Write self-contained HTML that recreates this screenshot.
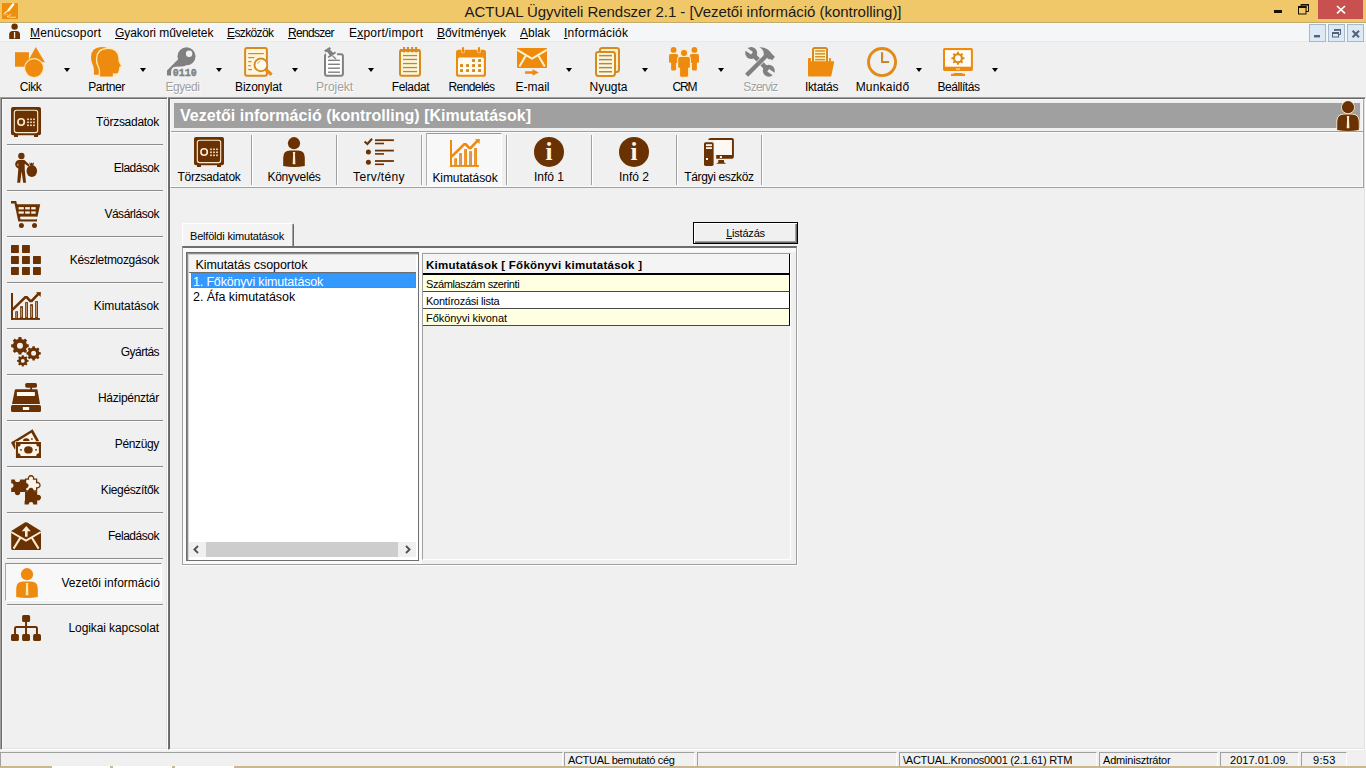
<!DOCTYPE html>
<html lang="hu"><head><meta charset="utf-8"><title>ACTUAL Ügyviteli Rendszer 2.1</title>
<style>
*{box-sizing:border-box;margin:0;padding:0}
html,body{width:1366px;height:768px;overflow:hidden;background:#F0F0F0;font-family:"Liberation Sans",sans-serif;color:#000}
.abs,body>div,body div{position:absolute}
svg{display:block;position:absolute;left:0;top:0}
#title{left:0;top:0;width:1366px;height:22px;background:#F0C869}
#title .t{left:0;width:1366px;top:2px;text-align:center;font-size:15px;line-height:20px;color:#1a1a1a;white-space:nowrap}
#menubar{left:0;top:22px;width:1366px;height:20px;background:#F5F6F7;border-top:1px solid #C2A96C;border-bottom:1px solid #E8E9EB;box-shadow:inset 0 1px 0 #FFFBEE}
#menubar span{position:absolute;top:3px;font-size:12px;line-height:15px;white-space:nowrap}
#menubar u{text-decoration:underline;text-underline-offset:1px}
#toolbar{left:0;top:42px;width:1366px;height:55px;background:#F0F0F0}
.tbtn{top:0;width:61px;height:55px}
.tbtn svg{left:15px;top:5px}
.tbtn span{position:absolute;left:-10px;width:81px;top:38px;text-align:center;font-size:12px;line-height:15px;white-space:nowrap}
.tbtn.dis span{color:#A0A0A0;text-shadow:1px 1px 0 #fff}
.dd{top:26px;width:0;height:0;border-left:3.5px solid transparent;border-right:3.5px solid transparent;border-top:4px solid #000}
#side{left:0;top:97px;width:168px;height:653px;border-left:1px solid #A0A0A0;border-top:1px solid #A0A0A0;border-right:1px solid #fff;border-bottom:1px solid #fff;box-shadow:inset 1px 1px 0 #696969,inset -1px -1px 0 #E3E3E3,inset 2px 2px 0 #FAFAFA}
.sitem{left:0;width:166px;height:45px}
.sitem span{position:absolute;top:16px;font-size:12px;line-height:15px;white-space:nowrap}
.sic{top:8px;width:30px;height:30px}
.ssep{left:7px;width:156px;height:2px;border-top:1px solid #8C8C8C;border-bottom:1px solid #FAFAFA}
.ssel{left:5px;width:157px;height:38px;background:#F8F8F8;border:1px solid #8E8E8E;border-left-color:#A8A8A8;border-right-color:#fff;border-bottom-color:#fff}
#main{left:168px;top:97px;width:1198px;height:653px;border-left:1px solid #707070;border-top:1px solid #A0A0A0;border-right:1px solid #fff;border-bottom:1px solid #fff;box-shadow:inset 1px 1px 0 #696969,inset -1px -1px 0 #E3E3E3}
#band{left:170px;top:99px;width:1194px;height:89px;border-left:1px solid #FAFAFA;border-top:1px solid #FAFAFA;border-right:1px solid #A0A0A0;border-bottom:1px solid #A0A0A0;box-shadow:inset -1px -1px 0 #FAFAFA}

#hdr{left:174px;top:103px;width:1186px;height:25px;background:#A0A0A0}
#hdr span{position:absolute;left:6px;top:3px;font-size:16px;line-height:20px;font-weight:bold;color:#fff;white-space:nowrap}
#hdric{left:1333px;top:101px;width:30px;height:30px}
.hl{height:1px;background:#A0A0A0}
.subbtn{width:84px;height:55px}
.subbtn span{position:absolute;left:-8px;width:100px;top:38px;text-align:center;font-size:12px;line-height:15px;white-space:nowrap}
.sic2{left:27px;top:5px;width:30px;height:30px}
.subsep{top:135px;width:2px;height:50px;border-left:1px solid #A0A0A0;border-right:1px solid #fff}
.subsel{top:133px;width:76px;height:53px;background:#F8F8F8;border:1px solid #9A9A9A;border-left-color:#B0B0B0;border-right-color:#fff;border-bottom-color:#fff}
#tab{left:182px;top:223px;width:112px;height:23px;background:#F4F4F4;border-left:1px solid #fff;border-top:1px solid #fff;border-right:1px solid #696969;box-shadow:inset -1px 0 0 #A0A0A0;border-radius:2px 2px 0 0;z-index:2}
#tab span{position:absolute;left:7px;top:5px;font-size:11px;line-height:14px;white-space:nowrap}
#tabpanel{left:182px;top:246px;width:616px;height:320px;border-left:1px solid #A0A0A0;border-top:2px solid #6E6E6E;border-right:2px solid #A0A0A0;border-right-color:#A0A0A0;border-bottom:2px solid #A0A0A0;box-shadow:inset 0 4px 0 #FAFAFA}
#tabpanel:after{content:"";position:absolute;right:-2px;top:-2px;bottom:-2px;width:1px;background:#FDFDFD}
#tabpanel:before{content:"";position:absolute;left:-1px;right:-2px;bottom:-2px;height:1px;background:#FDFDFD}
#listwrap{left:183px;top:248px;width:239px;height:316px;background:#FAFAFA}
#btn{left:693px;top:222px;width:105px;height:22px;background:#F0F0F0;border:1px solid #000;box-shadow:inset 1px 1px 0 #fff,inset -1px -1px 0 #696969,inset -2px -2px 0 #A0A0A0;z-index:3}
#btn span{position:absolute;left:0;width:100%;top:3px;text-align:center;font-size:11px;line-height:14px}
#list{left:186px;top:252px;width:233px;height:309px;background:#fff;border-left:1px solid #6E6E6E;border-top:1px solid #6E6E6E;border-right:1px solid #6E6E6E;border-bottom:1px solid #6E6E6E;box-shadow:inset 1px 1px 0 #8C8C8C,inset 2px 2px 0 #D4D4D4}
#list span{position:absolute;white-space:nowrap;font-size:12.5px;line-height:15px}
.lh{left:2px;top:2px;width:227px;height:18px;background:#F4F4F4;border-bottom:1px solid #6E6E6E}
.lh span{left:6.5px;top:2.5px}
.lsel{left:4px;top:20px;width:225px;height:15px;background:#3399FF;color:#fff;outline:1px dotted rgba(120,110,90,.45);outline-offset:-1px}
.lsel span{left:2px;top:1.5px}
.lrow{left:4px;top:35px;width:225px;height:15px}
.lrow span{left:2px;top:1.5px}
.hs{left:2px;top:289px;width:227px;height:15px;background:#F0F0F0}
.hs b{position:absolute;left:17px;top:0;width:192px;height:15px;background:#CDCDCD}
#grid{left:422px;top:253px;width:369px;height:307px;border-left:1px solid #A0A0A0;border-top:1px solid #A0A0A0;border-right:1px solid #fff;border-bottom:1px solid #fff}
#grid span{position:absolute;left:3px;white-space:nowrap;font-size:11px;line-height:14px}
.gh{left:0;top:0;width:367px;height:21px;background:#F4F4F4;border-bottom:2px solid #000;border-right:1px solid #000}
.gh span{top:4px;left:3px!important;font-weight:bold;font-size:11.5px!important}
.gr{left:0;width:367px;height:17px;background:#fff;border-bottom:1px solid #484848;border-right:1px solid #000}
.gr.y{background:#FFFFE1}
.gr span{top:2px}
#status{left:0;top:752px;width:1366px;height:14px}
.sp{top:0;height:14px;border-top:1px solid #A0A0A0;border-left:1px solid #A0A0A0;border-right:1px solid #fff}
.sp span{position:absolute;left:3px;top:1px;font-size:11px;line-height:13px;white-space:nowrap}
#strip{left:0;top:766px;width:1366px;height:2px;background:#C9B88F}
#strip i{position:absolute;top:0;height:2px;background:#fff}

#wmin{left:1274px;top:10px;width:8px;height:3px;background:#1a1000}
#wmax{left:1298px;top:4px;width:12px;height:11px}
#wclose{left:1318px;top:0;width:45px;height:19px;background:#C8504F}
.mdi{top:1px;width:17px;height:18px;background:#DDE9F5;border:1px solid #A8B8CC}
.mdi svg{left:-1px;top:-0.5px}
</style></head><body>
<div id="title"><div style="left:2px;top:3px;width:16px;height:16px"><svg width="16" height="16" viewBox="0 0 16 16" style="overflow:visible"><rect width="16" height="16" fill="#EE8E0C"/><path fill="none" stroke="#FFFBE8" stroke-width="2.3" stroke-linecap="round" d="M11.2 1.2 L6.6 7.2"/><path fill="none" stroke="#FFF0B8" stroke-width="1.1" d="M6.8 7 L2 10.8"/><path fill="none" stroke="#FFE7A0" stroke-width="1" d="M9.4 11.2 Q6.4 12.6 5 13.6 Q9 14.8 13.8 14.2"/><path fill="none" stroke="#F8C060" stroke-width="0.8" d="M1.5 12 L6 11.4"/></svg></div><div class="t" style="letter-spacing:-0.04px">ACTUAL Ügyviteli Rendszer 2.1 - [Vezetői információ (kontrolling)]</div>
<div id="wmin"></div>
<div id="wmax"><svg width="12" height="11" viewBox="0 0 12 11"><path fill="none" stroke="#1a1000" stroke-width="1" d="M3 2.5 V0.5 H10.5 V7.5 H8"/><rect x="3" y="0" width="8" height="1.6" fill="#1a1000"/><rect x="0.5" y="2.5" width="7.5" height="7.5" fill="none" stroke="#1a1000"/><rect x="0" y="2" width="8.5" height="2" fill="#1a1000"/></svg></div>
<div id="wclose"><svg width="45" height="19" viewBox="0 0 45 19"><path stroke="#fff" stroke-width="1.7" d="M19 6 L27 13.4 M27 6 L19 13.4"/></svg></div></div>
<div id="menubar"><div style="left:9px;top:0px;width:16px;height:17px"><svg width="12" height="17" viewBox="0 0 12 17" style="overflow:visible"><circle cx="5.6" cy="3.6" r="3.2" fill="#6A3202"/><path fill="#6A3202" d="M0.2 16 V11.5 Q0.2 8 3.7 8 H7.5 Q11 8 11 11.5 V16Z"/><rect x="4.9" y="9" width="1.3" height="6.3" fill="#FCEBD2"/></svg></div>
<span style="letter-spacing:0.163px;left:30px"><u>M</u>enücsoport</span><span style="letter-spacing:-0.056px;left:115px"><u>G</u>yakori műveletek</span><span style="letter-spacing:-0.625px;left:227px"><u>E</u>szközök</span><span style="letter-spacing:-0.696px;left:288px"><u>R</u>endszer</span><span style="letter-spacing:0.219px;left:349px">E<u>x</u>port/import</span><span style="letter-spacing:-0.037px;left:437px"><u>B</u>ővítmények</span><span style="letter-spacing:-0.008px;left:520px"><u>A</u>blak</span><span style="letter-spacing:0.197px;left:564px"><u>I</u>nformációk</span>
<div class="mdi" style="left:1309px"><svg width="17" height="17" viewBox="0 0 17 17"><rect x="5" y="10" width="6" height="2.4" fill="#52627A"/></svg></div>
<div class="mdi" style="left:1328px"><svg width="17" height="17" viewBox="0 0 17 17"><path fill="none" stroke="#52627A" stroke-width="1" d="M6.5 6 V4.5 H12.5 V9.5 H11"/><rect x="6" y="4" width="7" height="1.8" fill="#52627A"/><rect x="4.5" y="7.5" width="6" height="4.5" fill="none" stroke="#52627A"/><rect x="4" y="7" width="7" height="2" fill="#52627A"/></svg></div>
<div class="mdi" style="left:1347px"><svg width="17" height="17" viewBox="0 0 17 17"><path stroke="#52627A" stroke-width="2" d="M5.6 5.8 L12 12.2 M12 5.8 L5.6 12.2"/></svg></div>
</div>
<div id="toolbar">
<div class="tbtn" style="left:0px"><svg width="30" height="30" viewBox="0 0 30 30" style="overflow:visible"><rect x="0" y="5.2" width="13.9" height="14.5" fill="#EE8A0E"/><path fill="#EE8A0E" d="M20.8 0 L29.9 15.2 H12.4Z"/><circle cx="19.05" cy="21.05" r="8.9" fill="#EE8A0E" stroke="#FFE9B5" stroke-width="2.2" paint-order="stroke"/></svg><span style="letter-spacing:-0.448px">Cikk</span></div>
<div class="dd" style="left:64px"></div>
<div class="tbtn" style="left:76px"><svg width="30" height="30" viewBox="0 0 30 30" style="overflow:visible"><path fill="#EE8A0E" transform="translate(-6.2,-1.9)" d="M9.1 29.7 V24.2 Q9 21.2 7.5 18.6 Q6 15.6 6.2 12 Q6.6 2 17 2 Q26.4 2 27.3 10.8 Q27.4 13.6 27.6 14.8 L29.8 18.8 Q29.9 19.8 28.1 20 L28.1 22 Q27.6 23 27.7 23.6 Q27.5 26.3 25 26.4 L21.8 26.3 V29.7Z"/><path fill="#EE8A0E" stroke="#FFE9B5" stroke-width="2.6" paint-order="stroke" d="M9.1 29.7 V24.2 Q9 21.2 7.5 18.6 Q6 15.6 6.2 12 Q6.6 2 17 2 Q26.4 2 27.3 10.8 Q27.4 13.6 27.6 14.8 L29.8 18.8 Q29.9 19.8 28.1 20 L28.1 22 Q27.6 23 27.7 23.6 Q27.5 26.3 25 26.4 L21.8 26.3 V29.7Z"/><rect x="7" y="29.7" width="17" height="2" fill="#F0F0F0"/></svg><span style="letter-spacing:-0.377px">Partner</span></div>
<div class="dd" style="left:140px"></div>
<div class="tbtn dis" style="left:152px"><svg width="30" height="30" viewBox="0 0 30 30" style="overflow:visible"><path fill="#808080" d="M0 23.4 L11.4 12 L19 18.6 Q17 19.6 14 19.6 L8.4 19.7 Q4.1 20.5 4.1 24.5 V28.6 H0Z"/><circle cx="19.5" cy="9.3" r="9" fill="#808080"/><circle cx="22.1" cy="6.7" r="3.2" fill="#F2F2F2"/><text x="5.7" y="28.6" font-family="Liberation Mono,monospace" font-weight="bold" font-size="10" fill="#808080" stroke="#808080" stroke-width="0.35">0110</text></svg><span style="letter-spacing:-0.441px">Egyedi</span></div>
<div class="dd" style="left:216px"></div>
<div class="tbtn" style="left:228px"><svg width="30" height="30" viewBox="0 0 30 30" style="overflow:visible"><rect x="2.1" y="1" width="21.8" height="27.8" rx="2" fill="#FFF6DC" stroke="#D68B22" stroke-width="2"/><rect x="5.2" y="6" width="15.6" height="1.2" fill="#D68B22"/><rect x="5.2" y="10" width="6.2" height="1.2" fill="#D68B22"/><rect x="5.2" y="14" width="3.4" height="1.2" fill="#D68B22"/><rect x="5.2" y="18" width="2.6" height="1.2" fill="#D68B22"/><rect x="5.2" y="22" width="3.8" height="1.2" fill="#D68B22"/><path stroke="#EE8A0E" stroke-width="3.2" d="M22.4 22.2 L28.6 27.8"/><circle cx="17.9" cy="17.9" r="6.4" fill="#FFFBF0" stroke="#D68B22" stroke-width="1.9"/><path fill="none" stroke="#B9935A" stroke-width="0.8" d="M14.6 16.8 Q15.2 14.8 17.4 14.2"/></svg><span style="letter-spacing:-0.213px">Bizonylat</span></div>
<div class="dd" style="left:292px"></div>
<div class="tbtn dis" style="left:304px"><svg width="30" height="30" viewBox="0 0 30 30" style="overflow:visible"><rect x="6" y="7.2" width="17.9" height="21.6" rx="2" fill="#FFFFFF" stroke="#808080" stroke-width="2"/><path fill="#F6F6F6" d="M6.6 5 L17.6 5 L19 12 L8 12Z"/><rect x="9.1" y="12.6" width="11.8" height="1.4" fill="#808080"/><rect x="9.1" y="16.6" width="11.8" height="1.4" fill="#808080"/><rect x="9.1" y="20.5" width="11.8" height="1.4" fill="#808080"/><rect x="9.1" y="24.5" width="11.8" height="1.4" fill="#808080"/><path fill="#808080" d="M5.1 3.6 L10.6 -0.1 L12.1 1.7 L6.8 5.6Z M7.9 4.6 L10.8 2.4 L15.3 6.8 L11.8 9.7Z M8.6 9.7 L16 4.5 L17.1 6 L9.8 11.1Z"/><path stroke="#808080" stroke-width="1.3" d="M13.4 8.6 L16.9 12"/></svg><span style="letter-spacing:-0.06px">Projekt</span></div>
<div class="dd" style="left:368px"></div>
<div class="tbtn" style="left:380px"><svg width="30" height="30" viewBox="0 0 30 30" style="overflow:visible"><rect x="5" y="3" width="20" height="25.8" rx="2" fill="#FFF6D8" stroke="#D68B22" stroke-width="2"/><rect x="5" y="2" width="20" height="2.8" fill="#D68B22"/><rect x="8" y="0" width="2.1" height="5.4" fill="#D68B22"/><rect x="11.9" y="0" width="2.1" height="5.4" fill="#D68B22"/><rect x="16.1" y="0" width="2.1" height="5.4" fill="#D68B22"/><rect x="20" y="0" width="2.1" height="5.4" fill="#D68B22"/><rect x="8" y="7.9" width="14" height="1.3" fill="#B58A3C"/><rect x="8" y="11.8" width="14" height="1.3" fill="#B58A3C"/><rect x="8" y="15.9" width="14" height="1.3" fill="#B58A3C"/><rect x="8" y="19.9" width="14" height="1.3" fill="#B58A3C"/><rect x="8" y="23.9" width="14" height="1.3" fill="#B58A3C"/></svg><span style="letter-spacing:-0.339px">Feladat</span></div>
<div class="tbtn" style="left:441px"><svg width="30" height="30" viewBox="0 0 30 30" style="overflow:visible"><rect x="0" y="2.8" width="30" height="27" rx="2.6" fill="#EE8A0E"/><rect x="2" y="10.4" width="25.9" height="17.4" rx="1.6" fill="#FFFBEE"/><rect x="5.3" y="-0.6" width="3.3" height="6.9" rx="1.6" fill="#FFE9B5"/><rect x="21.4" y="-0.6" width="3.3" height="6.9" rx="1.6" fill="#FFE9B5"/><rect x="5.9" y="0" width="2.1" height="5.7" rx="1" fill="#EE8A0E"/><rect x="22" y="0" width="2.1" height="5.7" rx="1" fill="#EE8A0E"/><rect x="4.1" y="17.1" width="2.9" height="2.9" fill="#D58A1E"/><rect x="4.1" y="22.1" width="2.9" height="2.9" fill="#D58A1E"/><rect x="10.1" y="17.1" width="2.9" height="2.9" fill="#D58A1E"/><rect x="10.1" y="22.1" width="2.9" height="2.9" fill="#D58A1E"/><rect x="16.1" y="12.1" width="2.9" height="2.9" fill="#D58A1E"/><rect x="16.1" y="17.1" width="2.9" height="2.9" fill="#D58A1E"/><rect x="16.1" y="22.1" width="2.9" height="2.9" fill="#D58A1E"/><rect x="22.1" y="12.1" width="2.9" height="2.9" fill="#D58A1E"/><rect x="22.1" y="17.1" width="2.9" height="2.9" fill="#D58A1E"/><rect x="22.1" y="22.1" width="2.9" height="2.9" fill="#D58A1E"/></svg><span style="letter-spacing:-0.6px">Rendelés</span></div>
<div class="tbtn" style="left:502px"><svg width="30" height="30" viewBox="0 0 30 30" style="overflow:visible"><rect x="0" y="1" width="30" height="19.9" rx="1" fill="#EE8A0E"/><path fill="none" stroke="#FFF3D0" stroke-width="2" d="M0.2 2.8 L15 11.5 L29.9 2.8 M2.4 19.6 L8.6 9 M27.8 19.6 L21.6 9"/><path fill="#EE8A0E" d="M8 24.3 H15.6 V22.3 L21.8 25.5 L15.6 28.7 V26.8 H8Z"/></svg><span>E-mail</span></div>
<div class="dd" style="left:566px"></div>
<div class="tbtn" style="left:578px"><svg width="30" height="30" viewBox="0 0 30 30" style="overflow:visible"><rect x="6.9" y="1" width="19.1" height="24" rx="2.4" fill="#FFEFC4" stroke="#D68B22" stroke-width="2"/><rect x="3" y="5" width="19" height="23.9" rx="2.4" fill="#FFF7DC" stroke="#D68B22" stroke-width="2"/><rect x="6" y="7.9" width="13" height="1.5" fill="#A88A54"/><rect x="6" y="11.9" width="13" height="1.5" fill="#A88A54"/><rect x="6" y="15.9" width="13" height="1.5" fill="#A88A54"/><rect x="6" y="19.9" width="13" height="1.5" fill="#A88A54"/><rect x="6" y="24" width="13" height="1.5" fill="#A88A54"/></svg><span style="letter-spacing:-0.006px">Nyugta</span></div>
<div class="dd" style="left:642px"></div>
<div class="tbtn" style="left:654px"><svg width="30" height="30" viewBox="0 0 30 30" style="overflow:visible"><g fill="#EE8A0E"><circle cx="4.6" cy="2.9" r="2.9"/><path d="M1.8 7.1 H7.3999999999999995 Q9.2 7.1 9.2 8.9 V14.8 Q9.2 15.8 8.2 15.8 H7.1 V22.200000000000003 Q7.1 23.6 5.699999999999999 23.6 H3.4999999999999996 Q2.0999999999999996 23.6 2.0999999999999996 22.200000000000003 V15.8 H1.0 Q0.0 15.8 0.0 14.8 V8.9 Q0.0 7.1 1.8 7.1Z"/><circle cx="25.4" cy="2.9" r="2.9"/><path d="M22.599999999999998 7.1 H28.2 Q30.0 7.1 30.0 8.9 V14.8 Q30.0 15.8 29.0 15.8 H27.9 V22.200000000000003 Q27.9 23.6 26.5 23.6 H24.299999999999997 Q22.9 23.6 22.9 22.200000000000003 V15.8 H21.799999999999997 Q20.799999999999997 15.8 20.799999999999997 14.8 V8.9 Q20.799999999999997 7.1 22.599999999999998 7.1Z"/></g><g fill="#EE8A0E" stroke="#FFE9B5" stroke-width="2.2" paint-order="stroke"><circle cx="15.05" cy="5.9" r="3.0"/><path d="M11.000000000000002 10.1 H19.099999999999998 Q20.9 10.1 20.9 11.9 V19.8 Q20.9 20.8 19.9 20.8 H19.0 V28.400000000000002 Q19.0 29.8 17.6 29.8 H12.500000000000002 Q11.100000000000001 29.8 11.100000000000001 28.400000000000002 V20.8 H10.200000000000001 Q9.200000000000001 20.8 9.200000000000001 19.8 V11.9 Q9.200000000000001 10.1 11.000000000000002 10.1Z"/></g></svg><span style="letter-spacing:-1.164px">CRM</span></div>
<div class="dd" style="left:718px"></div>
<div class="tbtn dis" style="left:730px"><svg width="30" height="30" viewBox="0 0 30 30" style="overflow:visible"><g fill="#808080"><path stroke="#808080" stroke-width="4.6" d="M8 7.6 L22 22"/><circle cx="6.2" cy="6" r="6"/><circle cx="23.8" cy="23.8" r="6"/></g><rect x="-7.5" y="-1.6" width="7.5" height="3.2" fill="#F0F0F0" transform="translate(7,6.2) rotate(35)"/><rect x="0" y="-1.6" width="7.5" height="3.2" fill="#F0F0F0" transform="translate(23.2,23.2) rotate(35)"/><path stroke="#F0F0F0" stroke-width="5.6" d="M11 19 L20 10"/><path stroke="#808080" stroke-width="4.4" d="M1.6 28.3 L22 8"/><path fill="#808080" d="M14.3 0.3 Q22 -0.2 27 7 L29.9 9.8 L27 13.4 L25.6 11.9 L24 12.6 L18.6 7.4 Q19.4 3 14.3 0.3Z"/></svg><span style="letter-spacing:-0.724px">Szerviz</span></div>
<div class="tbtn" style="left:791px"><svg width="30" height="30" viewBox="0 0 30 30" style="overflow:visible"><rect x="7" y="1" width="14" height="16" rx="1.6" fill="#FFF3C0" stroke="#D68B22" stroke-width="2"/><rect x="9.1" y="3.2" width="10" height="1.5" fill="#D8902E"/><rect x="9.1" y="6.1" width="10" height="1.5" fill="#D8902E"/><rect x="9.1" y="9" width="10" height="1.5" fill="#D8902E"/><rect x="9.1" y="11.9" width="10" height="1.5" fill="#D8902E"/><path fill="#EE8A0E" d="M2 12.1 Q2 11.1 3 11.1 H4.9 V15 L5.2 14.3 H23.1 V11.1 H24.2 Q25 11.1 25 12 V14.3 H27.4 Q28.4 14.3 28.1 15.4 L25.4 28.6 Q25.2 29.6 24.2 29.6 H3 Q2 29.6 2 28.6Z"/></svg><span style="letter-spacing:-0.31px">Iktatás</span></div>
<div class="tbtn" style="left:852px"><svg width="30" height="30" viewBox="0 0 30 30" style="overflow:visible"><circle cx="15.05" cy="15.05" r="13.55" fill="none" stroke="#E28A16" stroke-width="2.9"/><path fill="#C8882E" d="M14 5.2 H16.1 V14 H22.1 V15.9 H14Z"/></svg><span style="letter-spacing:0.21px">Munkaidő</span></div>
<div class="dd" style="left:916px"></div>
<div class="tbtn" style="left:928px"><svg width="30" height="30" viewBox="0 0 30 30" style="overflow:visible"><rect x="0" y="1" width="29.9" height="22.9" rx="1.6" fill="#EE8A0E"/><rect x="2" y="3.1" width="25.9" height="16.6" fill="#FFFDF5"/><rect x="13" y="21.5" width="3.9" height="1.1" fill="#FFE9B5"/><path fill="#EE8A0E" d="M10.9 26 H19.2 L19.6 26.8 H22 V28.9 H8 V26.8 H10.5Z"/><path fill-rule="evenodd" fill="#DC8A1C" d="M19.95 10.26 L21.49 10.35 L21.49 12.15 L19.95 12.24 L19.19 14.08 L20.21 15.23 L18.93 16.51 L17.78 15.49 L15.94 16.25 L15.85 17.79 L14.05 17.79 L13.96 16.25 L12.12 15.49 L10.97 16.51 L9.69 15.23 L10.71 14.08 L9.95 12.24 L8.41 12.15 L8.41 10.35 L9.95 10.26 L10.71 8.42 L9.69 7.27 L10.97 5.99 L12.12 7.01 L13.96 6.25 L14.05 4.71 L15.85 4.71 L15.94 6.25 L17.78 7.01 L18.93 5.99 L20.21 7.27 L19.19 8.42Z M12.05 11.25 a2.9 2.9 0 1 0 5.8 0 a2.9 2.9 0 1 0 -5.8 0Z"/></svg><span style="letter-spacing:-0.441px">Beállítás</span></div>
<div class="dd" style="left:992px"></div>
</div>
<div id="side">
</div>
<div id="sidein" style="left:0;top:0;width:167px;height:750px">
<div class="sitem" style="top:99px"><div class="sic" style="left:11px"><svg width="30" height="30" viewBox="0 0 30 30" style="overflow:visible"><rect x="0" y="0" width="30" height="28.2" rx="2" fill="#6A3202"/><rect x="3" y="27" width="4" height="3" fill="#6A3202"/><rect x="23" y="27" width="4" height="3" fill="#6A3202"/><rect x="3.3" y="3.3" width="23.4" height="22.3" rx="2.3" fill="none" stroke="#FCEBD2" stroke-width="1.1"/><circle cx="10.1" cy="15" r="3.2" fill="none" stroke="#FCEBD2" stroke-width="1.6"/><rect x="16.2" y="11.5" width="1.6" height="1.6" fill="#FCEBD2"/><rect x="16.2" y="14.5" width="1.6" height="1.6" fill="#FCEBD2"/><rect x="16.2" y="17.5" width="1.6" height="1.6" fill="#FCEBD2"/><rect x="19.2" y="11.5" width="1.6" height="1.6" fill="#FCEBD2"/><rect x="19.2" y="14.5" width="1.6" height="1.6" fill="#FCEBD2"/><rect x="19.2" y="17.5" width="1.6" height="1.6" fill="#FCEBD2"/><rect x="22.2" y="11.5" width="1.6" height="1.6" fill="#FCEBD2"/><rect x="22.2" y="14.5" width="1.6" height="1.6" fill="#FCEBD2"/><rect x="22.2" y="17.5" width="1.6" height="1.6" fill="#FCEBD2"/></svg></div><span style="letter-spacing:-0.273px;right:7px">Törzsadatok</span></div>
<div class="ssep" style="top:144px"></div>
<div class="sitem" style="top:145px"><div class="sic" style="left:11px"><svg width="30" height="30" viewBox="0 0 30 30" style="overflow:visible"><circle cx="10.4" cy="2.9" r="3.2" fill="#6A3202"/><path fill-rule="evenodd" fill="#6A3202" d="M7.6 7.1 Q10.5 6.6 13.4 7.1 L18.6 12 L17.4 13.6 L13.7 10.8 L13.7 16 L15 29.7 L12.2 29.7 L10.6 18.5 L9.2 29.7 L6.2 29.7 L7.3 16 L7.3 15.6 Q4.2 14.2 4.1 11.6 Q4.4 8 7.6 7.1Z M7.2 10 L6.3 12 L7.3 13.4Z"/><ellipse cx="20.8" cy="18" rx="5.3" ry="6" fill="#6A3202"/><path fill="#6A3202" d="M18.2 9 L19.6 10.4 L20.6 9.4 L21.6 10.4 L23 9 L22.4 12.5 L19 12.5Z"/></svg></div><span style="letter-spacing:-0.525px;right:7px">Eladások</span></div>
<div class="ssep" style="top:190px"></div>
<div class="sitem" style="top:191px"><div class="sic" style="left:11px"><svg width="30" height="30" viewBox="0 0 30 30" style="overflow:visible"><path fill="#6A3202" d="M0 2.1 H5.2 L6 5.2 H29.2 L26.5 17.8 H9.1 L9.6 20.2 H26 V22.6 H7.3 L3.5 4.6 H0Z"/><rect x="7.6" y="8.1" width="5.2" height="2.3" fill="#FBF0E2"/><rect x="7.6" y="12.4" width="5.2" height="2.3" fill="#FBF0E2"/><rect x="14.2" y="8.1" width="4.6" height="2.3" fill="#FBF0E2"/><rect x="14.2" y="12.4" width="4.6" height="2.3" fill="#FBF0E2"/><rect x="20.2" y="8.1" width="4.5" height="2.3" fill="#FBF0E2"/><rect x="20.2" y="12.4" width="4.5" height="2.3" fill="#FBF0E2"/><rect x="9.6" y="17.8" width="15.4" height="2.4" fill="#FBF0E2"/><circle cx="10.4" cy="26.5" r="2.5" fill="#6A3202"/><circle cx="23.5" cy="26.5" r="2.5" fill="#6A3202"/></svg></div><span style="letter-spacing:-0.475px;right:7px">Vásárlások</span></div>
<div class="ssep" style="top:236px"></div>
<div class="sitem" style="top:237px"><div class="sic" style="left:11px"><svg width="30" height="30" viewBox="0 0 30 30" style="overflow:visible"><rect x="0" y="0" width="7.9" height="7.9" rx="0.6" fill="#6A3202"/><rect x="0" y="11" width="7.9" height="7.9" rx="0.6" fill="#6A3202"/><rect x="0" y="22" width="7.9" height="7.9" rx="0.6" fill="#6A3202"/><rect x="11" y="0" width="7.9" height="7.9" rx="0.6" fill="#6A3202"/><rect x="11" y="11" width="7.9" height="7.9" rx="0.6" fill="#6A3202"/><rect x="11" y="22" width="7.9" height="7.9" rx="0.6" fill="#6A3202"/><rect x="22" y="11" width="7.9" height="7.9" rx="0.6" fill="#6A3202"/><rect x="22" y="22" width="7.9" height="7.9" rx="0.6" fill="#6A3202"/></svg></div><span style="letter-spacing:-0.325px;right:7px">Készletmozgások</span></div>
<div class="ssep" style="top:282px"></div>
<div class="sitem" style="top:283px"><div class="sic" style="left:11px"><svg width="30" height="30" viewBox="0 0 30 30" style="overflow:visible"><rect x="0" y="2" width="2" height="27" fill="#6A3202"/><rect x="0" y="27" width="28.9" height="1.9" fill="#6A3202"/><rect x="4.75" y="20.75" width="1.8" height="6.699999999999999" fill="#B88452" fill-opacity="0.75" stroke="#6A3202" stroke-width="0.9"/><rect x="9.649999999999999" y="15.649999999999999" width="1.8" height="11.8" fill="#B88452" fill-opacity="0.75" stroke="#6A3202" stroke-width="0.9"/><rect x="14.649999999999999" y="11.549999999999999" width="1.8" height="15.9" fill="#B88452" fill-opacity="0.75" stroke="#6A3202" stroke-width="0.9"/><rect x="19.65" y="13.649999999999999" width="1.8" height="13.8" fill="#B88452" fill-opacity="0.75" stroke="#6A3202" stroke-width="0.9"/><rect x="24.65" y="10.549999999999999" width="1.8" height="16.9" fill="#B88452" fill-opacity="0.75" stroke="#6A3202" stroke-width="0.9"/><path d="M1.6 18.6 L14.2 6.3 H15.8 L19.2 9.9 H20.7 L27.6 2.6" fill="none" stroke="#6A3202" stroke-width="2.6"/><path fill="#6A3202" d="M25 1.2 L29.9 0.9 L29.6 5.9Z"/></svg></div><span style="letter-spacing:-0.073px;right:7px">Kimutatások</span></div>
<div class="ssep" style="top:328px"></div>
<div class="sitem" style="top:329px"><div class="sic" style="left:11px"><svg width="30" height="30" viewBox="0 0 30 30" style="overflow:visible"><path fill-rule="evenodd" fill="#6A3202" d="M15.86 7.14 L17.74 7.34 L17.74 10.26 L15.86 10.46 L15.01 12.51 L16.20 13.97 L14.13 16.04 L12.67 14.85 L10.62 15.70 L10.42 17.58 L7.50 17.58 L7.30 15.70 L5.25 14.85 L3.79 16.04 L1.72 13.97 L2.91 12.51 L2.06 10.46 L0.18 10.26 L0.18 7.34 L2.06 7.14 L2.91 5.09 L1.72 3.63 L3.79 1.56 L5.25 2.75 L7.30 1.90 L7.50 0.02 L10.42 0.02 L10.62 1.90 L12.67 2.75 L14.13 1.56 L16.20 3.63 L15.01 5.09Z M5.96 8.80 a3.0 3.0 0 1 0 6.0 0 a3.0 3.0 0 1 0 -6.0 0Z"/><path fill-rule="evenodd" fill="#6A3202" d="M28.24 15.00 L29.80 15.15 L29.80 17.55 L28.24 17.70 L27.55 19.38 L28.54 20.59 L26.84 22.29 L25.63 21.30 L23.95 21.99 L23.80 23.55 L21.40 23.55 L21.25 21.99 L19.57 21.30 L18.36 22.29 L16.66 20.59 L17.65 19.38 L16.96 17.70 L15.40 17.55 L15.40 15.15 L16.96 15.00 L17.65 13.32 L16.66 12.11 L18.36 10.41 L19.57 11.40 L21.25 10.71 L21.40 9.15 L23.80 9.15 L23.95 10.71 L25.63 11.40 L26.84 10.41 L28.54 12.11 L27.55 13.32Z M20.10 16.35 a2.5 2.5 0 1 0 5.0 0 a2.5 2.5 0 1 0 -5.0 0Z"/><path fill-rule="evenodd" fill="#6A3202" d="M16.18 22.85 L17.52 22.95 L17.52 24.85 L16.18 24.95 L15.64 26.25 L16.52 27.27 L15.17 28.62 L14.15 27.74 L12.85 28.28 L12.75 29.62 L10.85 29.62 L10.75 28.28 L9.45 27.74 L8.43 28.62 L7.08 27.27 L7.96 26.25 L7.42 24.95 L6.08 24.85 L6.08 22.95 L7.42 22.85 L7.96 21.55 L7.08 20.53 L8.43 19.18 L9.45 20.06 L10.75 19.52 L10.85 18.18 L12.75 18.18 L12.85 19.52 L14.15 20.06 L15.17 19.18 L16.52 20.53 L15.64 21.55Z M9.90 23.90 a1.9 1.9 0 1 0 3.8 0 a1.9 1.9 0 1 0 -3.8 0Z"/></svg></div><span style="letter-spacing:-0.553px;right:7px">Gyártás</span></div>
<div class="ssep" style="top:374px"></div>
<div class="sitem" style="top:375px"><div class="sic" style="left:11px"><svg width="30" height="30" viewBox="0 0 30 30" style="overflow:visible"><rect x="14.2" y="0" width="11.8" height="4.7" rx="1.6" fill="#6A3202"/><rect x="19.2" y="4" width="1.9" height="3" fill="#6A3202"/><path fill="#6A3202" d="M4.6 6.2 H25.8 Q26.4 6.2 26.6 7 L29 20.9 H1 L3.8 7 Q4 6.2 4.6 6.2Z"/><rect x="5.9" y="9" width="18" height="4" rx="0.5" fill="#FFFAF2"/><rect x="0" y="22" width="30" height="7" rx="1.6" fill="#6A3202"/><rect x="11.9" y="24" width="6.3" height="2.9" rx="0.5" fill="#FFFAF2"/></svg></div><span style="letter-spacing:-0.273px;right:7px">Házipénztár</span></div>
<div class="ssep" style="top:420px"></div>
<div class="sitem" style="top:421px"><div class="sic" style="left:11px"><svg width="30" height="30" viewBox="0 0 30 30" style="overflow:visible"><path fill="#6A3202" d="M0 13.5 L21.6 0.2 L28.3 12.2 L3.7 20.3Z"/><path fill="#FDF5EA" d="M3.6 14.2 L20.4 3.8 L25.4 12.4 L5.6 18.6Z"/><path fill="#6A3202" d="M12 11.9 A3.2 2.6 0 0 1 18.5 11.9Z"/><rect x="20.1" y="9.2" width="1.6" height="1.6" fill="#6A3202"/><rect x="4.3" y="12.4" width="26.2" height="17" fill="#FDF5EA"/><path fill-rule="evenodd" fill="#6A3202" d="M4.9 13 H30 V28.9 H4.9Z M9.6 15 A2.6 2.6 0 0 1 7 17.6 V24.3 A2.6 2.6 0 0 1 9.6 26.9 H25.3 A2.6 2.6 0 0 1 27.9 24.3 V17.6 A2.6 2.6 0 0 1 25.3 15Z"/><ellipse cx="17.4" cy="20.9" rx="4.3" ry="3.7" fill="#6A3202"/><rect x="9.2" y="20.1" width="1.6" height="1.6" fill="#6A3202"/><rect x="24.2" y="20.1" width="1.6" height="1.6" fill="#6A3202"/></svg></div><span style="letter-spacing:-0.367px;right:7px">Pénzügy</span></div>
<div class="ssep" style="top:466px"></div>
<div class="sitem" style="top:467px"><div class="sic" style="left:11px"><svg width="30" height="30" viewBox="0 0 30 30" style="overflow:visible"><path fill="#FAF4EC" stroke="#6A3202" stroke-width="1.3" d="M14.6 4.2 H17.4 A2.7 2.7 0 1 1 22.6 4.2 H25.6 V7.6 A2.7 2.7 0 1 1 25.6 12.8 V16 H14.6Z"/><path fill="#6A3202" d="M0.2 4.4 H3.9 A2.4 2.4 0 0 0 9.1 4.4 H14 V8.2 A2.6 2.6 0 1 1 14 13 V16.9 H9.1 A2.7 2.7 0 1 1 3.9 16.9 H0.2 V13 A2.4 2.4 0 0 0 0.2 8.2Z"/><path fill="#6A3202" d="M14 16.4 H17.3 A2.8 2.8 0 1 1 22.7 16.4 H26.2 V20 A2.8 2.8 0 1 1 26.2 25.2 V29.4 H22.3 A2.3 2.3 0 0 0 17.7 29.4 H13.6 V25.8 H14Z"/></svg></div><span style="letter-spacing:-0.345px;right:7px">Kiegészítők</span></div>
<div class="ssep" style="top:512px"></div>
<div class="sitem" style="top:513px"><div class="sic" style="left:11px"><svg width="30" height="30" viewBox="0 0 30 30" style="overflow:visible"><path fill="#6A3202" d="M15 1.2 Q15.6 1.2 16.2 1.6 L30 10 V27.8 Q30 28.9 28.9 28.9 H1.3 Q0.2 28.9 0.2 27.8 V10 L13.8 1.6 Q14.4 1.2 15 1.2Z"/><path fill="none" stroke="#FCEBD2" stroke-width="2" d="M0.2 11 L15 19.6 L29.9 11 M2.6 27.6 L9.4 16.6 M27.6 27.6 L20.8 16.6"/><path fill="#FCEBD2" d="M15.3 5 L19.8 10.2 H16.6 V15.8 H14 V10.2 H10.8Z"/></svg></div><span style="letter-spacing:-0.472px;right:7px">Feladások</span></div>
<div class="ssep" style="top:558px"></div>
<div class="ssel" style="top:563px"></div>
<div class="sitem" style="top:560px"><div class="sic" style="left:12px"><svg width="30" height="30" viewBox="0 0 30 30" style="overflow:visible"><circle cx="15" cy="6.2" r="6.1" fill="#EE8A0E" stroke="none" stroke-width="1.6" paint-order="stroke"/><path fill="#EE8A0E" stroke="none" stroke-width="1.6" paint-order="stroke" d="M4.2 29 V20.5 Q4.2 13.5 11.2 13.5 H18.8 Q25.8 13.5 25.8 20.5 V29 Q15 30.9 4.2 29Z"/><path fill="#FFE9A8" d="M13.8 15 H16.3 L16 17 L16.4 27.3 H13.7 L14.1 17Z"/></svg></div><span style="letter-spacing:0.026px;right:6px">Vezetői információ</span></div>
<div class="ssep" style="top:604px"></div>
<div class="sitem" style="top:605px"><div class="sic" style="left:11px"><svg width="30" height="30" viewBox="0 0 30 30" style="overflow:visible"><rect x="11.1" y="2" width="8" height="7" rx="1.6" fill="#6A3202"/><rect x="0" y="21" width="7.9" height="7" rx="1.6" fill="#6A3202"/><rect x="11.1" y="21" width="7.9" height="7" rx="1.6" fill="#6A3202"/><rect x="22.1" y="21" width="7.9" height="7" rx="1.6" fill="#6A3202"/><path fill="none" stroke="#6A3202" stroke-width="2" d="M15.05 8 V22 M4.05 22 V15.2 Q4.05 14 5.2 14 H24.8 Q25.95 14 25.95 15.2 V22"/></svg></div><span style="letter-spacing:-0.091px;right:7px">Logikai kapcsolat</span></div>
</div>
<div id="main"></div><div id="band"></div>

<div id="hdr"><span style="letter-spacing:0.017px">Vezetői információ (kontrolling) [Kimutatások]</span></div>
<div id="hdric"><svg width="30" height="30" viewBox="0 0 30 30" style="overflow:visible"><circle cx="15" cy="6.2" r="6.1" fill="#6A3202" stroke="#FCEBD2" stroke-width="1.6" paint-order="stroke"/><path fill="#6A3202" stroke="#FCEBD2" stroke-width="1.6" paint-order="stroke" d="M4.2 29 V20.5 Q4.2 13.5 11.2 13.5 H18.8 Q25.8 13.5 25.8 20.5 V29 Q15 30.9 4.2 29Z"/><path fill="#FCEBD2" d="M13.8 15 H16.3 L16 17 L16.4 27.3 H13.7 L14.1 17Z"/></svg></div>
<div class="hl" style="left:171px;top:131px;width:1192px;box-shadow:0 1px 0 #FAFAFA"></div>
<div class="subbtn" style="left:167px;top:132px"><div class="sic2"><svg width="30" height="30" viewBox="0 0 30 30" style="overflow:visible"><rect x="0" y="0" width="30" height="28.2" rx="2" fill="#6A3202"/><rect x="3" y="27" width="4" height="3" fill="#6A3202"/><rect x="23" y="27" width="4" height="3" fill="#6A3202"/><rect x="3.3" y="3.3" width="23.4" height="22.3" rx="2.3" fill="none" stroke="#FCEBD2" stroke-width="1.1"/><circle cx="10.1" cy="15" r="3.2" fill="none" stroke="#FCEBD2" stroke-width="1.6"/><rect x="16.2" y="11.5" width="1.6" height="1.6" fill="#FCEBD2"/><rect x="16.2" y="14.5" width="1.6" height="1.6" fill="#FCEBD2"/><rect x="16.2" y="17.5" width="1.6" height="1.6" fill="#FCEBD2"/><rect x="19.2" y="11.5" width="1.6" height="1.6" fill="#FCEBD2"/><rect x="19.2" y="14.5" width="1.6" height="1.6" fill="#FCEBD2"/><rect x="19.2" y="17.5" width="1.6" height="1.6" fill="#FCEBD2"/><rect x="22.2" y="11.5" width="1.6" height="1.6" fill="#FCEBD2"/><rect x="22.2" y="14.5" width="1.6" height="1.6" fill="#FCEBD2"/><rect x="22.2" y="17.5" width="1.6" height="1.6" fill="#FCEBD2"/></svg></div><span style="letter-spacing:-0.273px">Törzsadatok</span></div>
<div class="subsep" style="left:251px"></div>
<div class="subbtn" style="left:252px;top:132px"><div class="sic2"><svg width="30" height="30" viewBox="0 0 30 30" style="overflow:visible"><circle cx="15" cy="6.2" r="6.1" fill="#6A3202" stroke="none" stroke-width="1.6" paint-order="stroke"/><path fill="#6A3202" stroke="none" stroke-width="1.6" paint-order="stroke" d="M4.2 29 V20.5 Q4.2 13.5 11.2 13.5 H18.8 Q25.8 13.5 25.8 20.5 V29 Q15 30.9 4.2 29Z"/><path fill="#FCEBD2" d="M13.8 15 H16.3 L16 17 L16.4 27.3 H13.7 L14.1 17Z"/></svg></div><span style="letter-spacing:-0.247px">Könyvelés</span></div>
<div class="subsep" style="left:336px"></div>
<div class="subbtn" style="left:337px;top:132px"><div class="sic2"><svg width="30" height="30" viewBox="0 0 30 30" style="overflow:visible"><rect x="11" y="2.3" width="18.9" height="1.8" fill="#6A3202"/><rect x="11" y="5.699999999999999" width="9" height="1.6" fill="#6A3202"/><rect x="11" y="12.7" width="18.9" height="1.8" fill="#6A3202"/><rect x="11" y="16.099999999999998" width="9" height="1.6" fill="#6A3202"/><rect x="11" y="23.1" width="18.9" height="1.8" fill="#6A3202"/><rect x="11" y="26.5" width="9" height="1.6" fill="#6A3202"/><path fill="none" stroke="#6A3202" stroke-width="2.1" d="M0.6 4.4 L3.4 7 L8 1.8"/><circle cx="4.4" cy="14.9" r="2.5" fill="#6A3202"/><circle cx="4.4" cy="25.2" r="2.5" fill="#6A3202"/></svg></div><span style="letter-spacing:0.352px">Terv/tény</span></div>
<div class="subsep" style="left:421px"></div>
<div class="subsel" style="left:426px"></div>
<div class="subbtn" style="left:423px;top:133px"><div class="sic2"><svg width="30" height="30" viewBox="0 0 30 30" style="overflow:visible"><rect x="0" y="2" width="2" height="27" fill="#EE8A0E"/><rect x="0" y="27" width="28.9" height="1.9" fill="#EE8A0E"/><rect x="4.75" y="20.75" width="1.8" height="6.699999999999999" fill="#B88452" fill-opacity="0.75" stroke="#EE8A0E" stroke-width="0.9"/><rect x="9.649999999999999" y="15.649999999999999" width="1.8" height="11.8" fill="#B88452" fill-opacity="0.75" stroke="#EE8A0E" stroke-width="0.9"/><rect x="14.649999999999999" y="11.549999999999999" width="1.8" height="15.9" fill="#B88452" fill-opacity="0.75" stroke="#EE8A0E" stroke-width="0.9"/><rect x="19.65" y="13.649999999999999" width="1.8" height="13.8" fill="#B88452" fill-opacity="0.75" stroke="#EE8A0E" stroke-width="0.9"/><rect x="24.65" y="10.549999999999999" width="1.8" height="16.9" fill="#B88452" fill-opacity="0.75" stroke="#EE8A0E" stroke-width="0.9"/><path d="M1.6 18.6 L14.2 6.3 H15.8 L19.2 9.9 H20.7 L27.6 2.6" fill="none" stroke="#EE8A0E" stroke-width="2.6"/><path fill="#EE8A0E" d="M25 1.2 L29.9 0.9 L29.6 5.9Z"/></svg></div><span style="letter-spacing:-0.073px">Kimutatások</span></div>
<div class="subsep" style="left:506px"></div>
<div class="subbtn" style="left:507px;top:132px"><div class="sic2"><svg width="30" height="30" viewBox="0 0 30 30" style="overflow:visible"><circle cx="15" cy="14.9" r="15" fill="#6A3202"/><text x="14.9" y="23" text-anchor="middle" font-family="Liberation Serif,serif" font-weight="bold" font-size="25" fill="#FFF6E8">i</text></svg></div><span style="letter-spacing:-0.006px">Infó 1</span></div>
<div class="subsep" style="left:591px"></div>
<div class="subbtn" style="left:592px;top:132px"><div class="sic2"><svg width="30" height="30" viewBox="0 0 30 30" style="overflow:visible"><circle cx="15" cy="14.9" r="15" fill="#6A3202"/><text x="14.9" y="23" text-anchor="middle" font-family="Liberation Serif,serif" font-weight="bold" font-size="25" fill="#FFF6E8">i</text></svg></div><span style="letter-spacing:-0.006px">Infó 2</span></div>
<div class="subsep" style="left:676px"></div>
<div class="subbtn" style="left:677px;top:132px"><div class="sic2"><svg width="30" height="30" viewBox="0 0 30 30" style="overflow:visible"><path fill="#6A3202" d="M4.1 3.1 Q4.6 1 6.5 1 H27.9 Q29.9 1 29.9 3 V19.8 Q29.9 21.8 27.9 21.8 H12.2 V17.9 H27.9 V3.1Z"/><rect x="10.6" y="3.1" width="17.3" height="14.8" fill="#FDF8F2"/><rect x="15.9" y="19" width="2" height="2" fill="#FDF8F2"/><path fill="#6A3202" d="M14.3 23.1 H20 V25.2 L22.1 26.8 H12.2 L14.3 25.2Z"/><rect x="0" y="5.2" width="9.6" height="23.7" rx="1.6" fill="#6A3202"/><rect x="2" y="7.2" width="5.9" height="1.9" fill="#FDF8F2"/><rect x="2" y="10.2" width="5.9" height="1.8" fill="#FDF8F2"/><rect x="2" y="21" width="2" height="2" fill="#FDF8F2"/></svg></div><span style="letter-spacing:-0.353px">Tárgyi eszköz</span></div>
<div class="subsep" style="left:761px"></div>
<div id="tab"><span style="letter-spacing:-0.191px">Belföldi kimutatások</span></div>
<div id="tabpanel"></div><div id="listwrap"></div>
<div id="btn"><span style="letter-spacing:-0.211px"><u>L</u>istázás</span></div>
<div id="list">
 <div class="lh"><span style="letter-spacing:-0.069px">Kimutatás csoportok</span></div>
 <div class="lsel"><span style="letter-spacing:-0.172px">1. Főkönyvi kimutatások</span></div>
 <div class="lrow"><span style="letter-spacing:-0.037px">2. Áfa kimutatások</span></div>
 <div class="hs"><svg width="227" height="15" viewBox="0 0 227 15"><path fill="none" stroke="#505050" stroke-width="1.8" d="M9 4 L5.4 7.5 L9 11 M217 4 L220.6 7.5 L217 11"/></svg><b></b></div>
</div>
<div id="grid">
 <div class="gh"><span style="letter-spacing:0.256px">Kimutatások [ Főkönyvi kimutatások ]</span></div>
 <div class="gr y" style="top:21px"><span style="letter-spacing:-0.398px">Számlaszám szerinti</span></div>
 <div class="gr" style="top:38px"><span style="letter-spacing:-0.254px">Kontírozási lista</span></div>
 <div class="gr y" style="top:55px"><span style="letter-spacing:-0.062px">Főkönyvi kivonat</span></div>
</div>


<div id="status">
<div class="sp" style="left:0;width:563px"></div>
<div class="sp" style="left:564px;width:131px"><span style="letter-spacing:-0.328px">ACTUAL bemutató cég</span></div>
<div class="sp" style="left:697px;width:200px"></div>
<div class="sp" style="left:899px;width:198px"><span style="letter-spacing:-0.239px">\ACTUAL.Kronos0001 (2.1.61) RTM</span></div>
<div class="sp" style="left:1099px;width:119px"><span style="letter-spacing:-0.2px">Adminisztrátor</span></div>
<div class="sp" style="left:1220px;width:79px"><span style="letter-spacing:0.027px;left:9px">2017.01.09.</span></div>
<div class="sp" style="left:1301px;width:46px"><span style="letter-spacing:0.293px;left:11px">9:53</span></div>
</div>
<div id="strip"><i style="left:52px;width:58px"></i><i style="left:113px;width:59px"></i><i style="left:175px;width:59px"></i></div>

</body></html>
